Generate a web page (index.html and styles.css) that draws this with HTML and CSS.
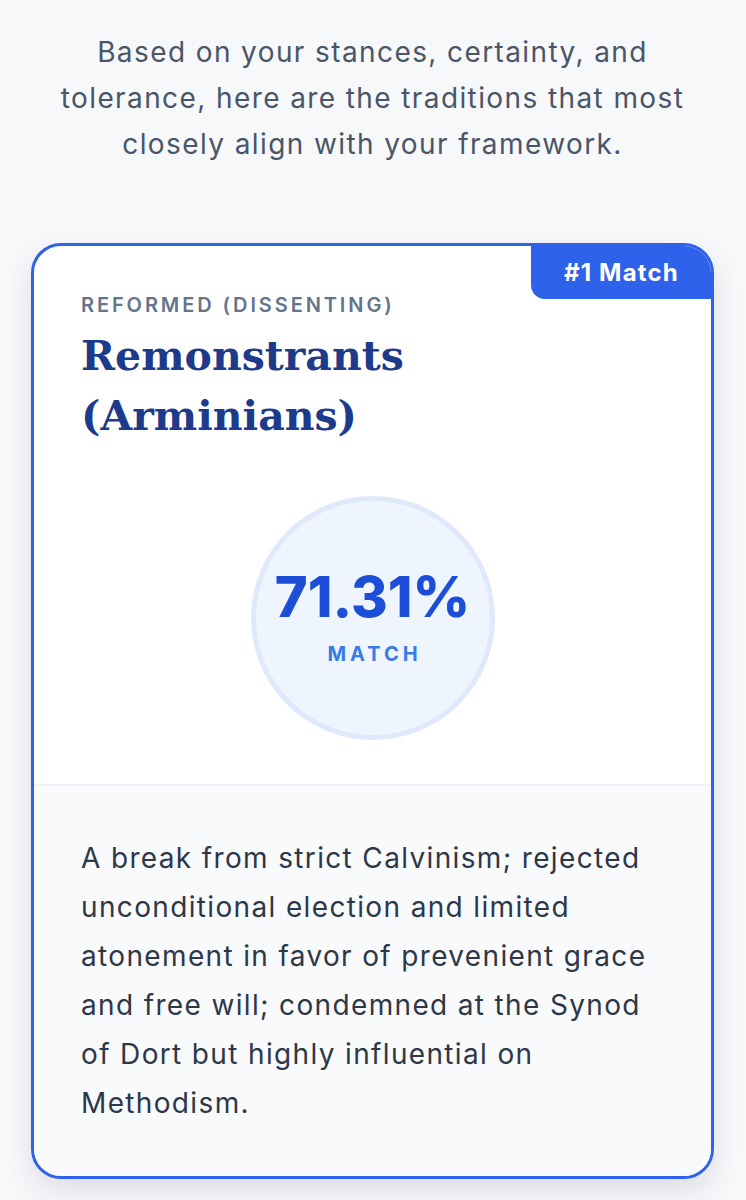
FILE: index.html
```html
<!DOCTYPE html>
<html lang="en">
<head>
<meta charset="utf-8">
<title>Matches</title>
<link rel="stylesheet" href="styles.css">
</head>
<body>
<main class="page">
  <p class="intro">Based on your stances, certainty, and tolerance, here are the traditions that most closely align with your framework.</p>
  <article class="card">
    <div class="badge">#1 Match</div>
    <div class="card-top">
      <div class="family">REFORMED (DISSENTING)</div>
      <h2 class="title">Remonstrants (Arminians)</h2>
      <div class="score-wrap">
        <div class="score">
          <div class="pct">71.31%</div>
          <div class="label">MATCH</div>
        </div>
      </div>
    </div>
    <div class="card-bottom">
      <p class="desc">A break from strict Calvinism; rejected unconditional election and limited atonement in favor of prevenient grace and free will; condemned at the Synod of Dort but highly influential on Methodism.</p>
    </div>
  </article>
</main>
</body>
</html>
```
FILE: styles.css
```css
html, body {
  margin: 0;
  padding: 0;
  background: #f7f8fa;
}
body {
  font-family: Inter, "Noto Sans", "Liberation Sans", sans-serif;
  color: #2d3748;
}
.page {
  padding: 29px 32px 40px 31px;
}
.intro {
  margin: 0 auto 76px;
  max-width: 650px;
  text-align: center;
  font-size: 28px;
  line-height: 46px;
  letter-spacing: 1.4px;
  color: #4a5568;
}
.card {
  position: relative;
  background: #ffffff;
  border: 3px solid #2f62ea;
  border-radius: 30px;
  overflow: hidden;
  box-shadow: 0 12px 28px rgba(30, 41, 59, 0.12);
}
.badge {
  position: absolute;
  top: 0;
  right: 0;
  background: #2f62ea;
  color: #ffffff;
  font-weight: 700;
  font-size: 24px;
  line-height: 29px;
  letter-spacing: 1.2px;
  padding: 12px 32px 12px 33px;
  border-bottom-left-radius: 14px;
}
.card-top {
  padding: 45px 47px 44px;
  border-bottom: 2px solid #eef1f5;
}
.family {
  font-size: 20px;
  line-height: 28px;
  font-weight: 600;
  letter-spacing: 2.9px;
  color: #64748b;
}
.title {
  margin: 7px 0 0;
  font-family: "DejaVu Serif", "Liberation Serif", serif;
  font-weight: 700;
  font-size: 41px;
  line-height: 60px;
  color: #1e3a8a;
}
.score-wrap {
  display: flex;
  justify-content: center;
  margin-top: 50px;
}
.score {
  width: 234px;
  height: 234px;
  border-radius: 50%;
  background: #eff5ff;
  border: 5px solid #dfe9fb;
  display: flex;
  flex-direction: column;
  align-items: center;
  justify-content: center;
}
.pct {
  font-size: 56px;
  line-height: 64px;
  font-weight: 800;
  color: #1d4ed8;
  margin-top: -4px;
}
.label {
  margin-top: 12px;
  margin-left: 4px;
  font-size: 20px;
  line-height: 26px;
  font-weight: 700;
  letter-spacing: 4px;
  color: #3b7be8;
}
.card-bottom {
  background: #f8fafc;
  padding: 48px 47px 48px;
}
.desc {
  margin: 0;
  font-size: 28px;
  line-height: 49px;
  letter-spacing: 1.35px;
  color: #2d3748;
}
```
